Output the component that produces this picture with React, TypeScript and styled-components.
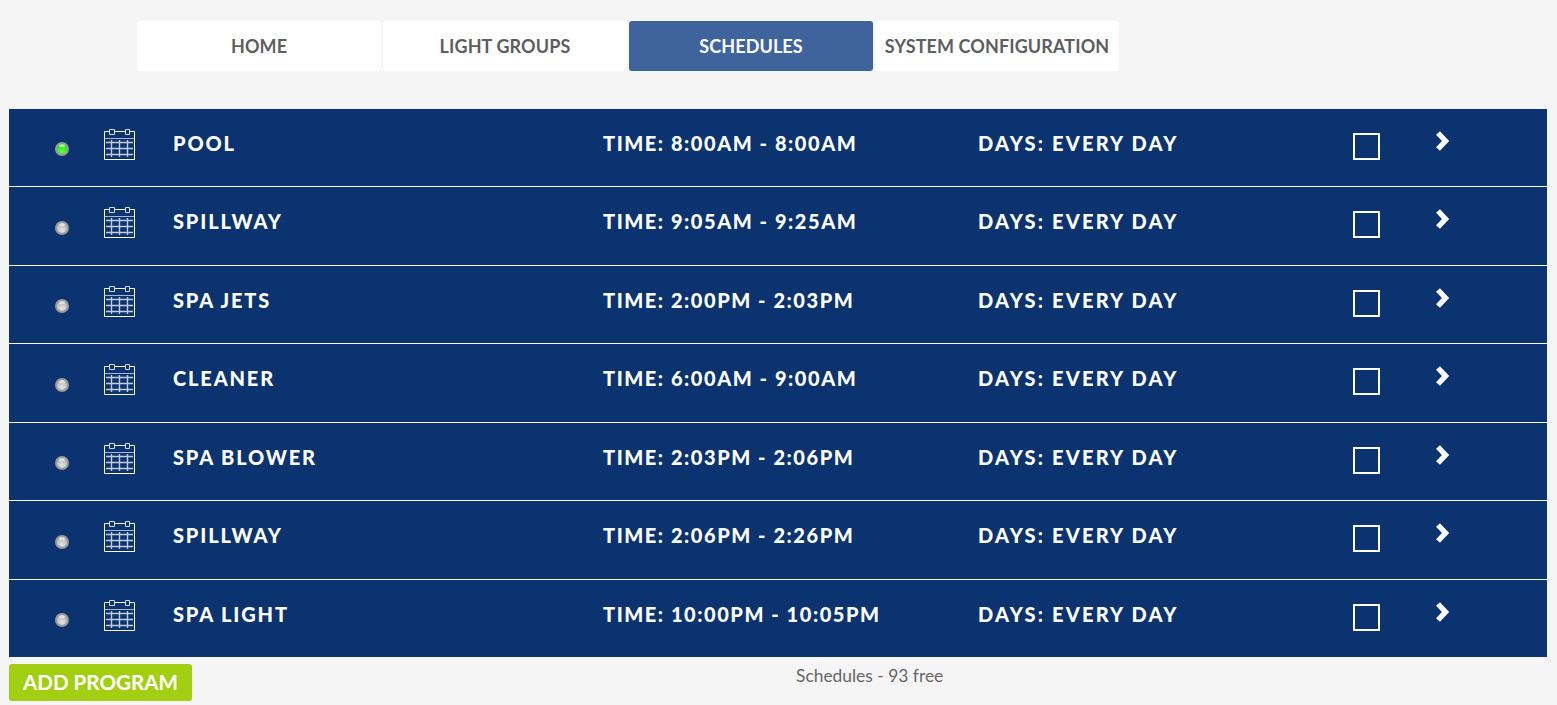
import * as React from "react";
import styled, { createGlobalStyle } from "styled-components";

const FONT = `Lato, "Open Sans", "Liberation Sans", sans-serif`;

const schedules = [
  { name: "POOL", time: "8:00AM - 8:00AM", on: true },
  { name: "SPILLWAY", time: "9:05AM - 9:25AM" },
  { name: "SPA JETS", time: "2:00PM - 2:03PM" },
  { name: "CLEANER", time: "6:00AM - 9:00AM" },
  { name: "SPA BLOWER", time: "2:03PM - 2:06PM" },
  { name: "SPILLWAY", time: "2:06PM - 2:26PM" },
  { name: "SPA LIGHT", time: "10:00PM - 10:05PM" },
];

const tabs = ["HOME", "LIGHT GROUPS", "SCHEDULES", "SYSTEM CONFIGURATION"];

function CalendarIcon() {
  return (
    <CalendarSvg viewBox="0 0 31 31" fill="none">
      <path d="M.5 2.5h30v28H.5z" stroke="#fff" />
      <path d="M.5 9.5h30" stroke="#aab6cc" />
      <path d="M5.5.5h5v5h-5zM21.5.5h4v5h-4z" fill="#0b3370" stroke="#d5dbe6" />
      <path
        d="M2 13.5h27M2 19.5h27M2 25.5h27M7.5 11v17M15.5 11v17M23.5 11v17"
        stroke="#c3ccdc"
        strokeWidth="1.4"
      />
    </CalendarSvg>
  );
}

function Chevron() {
  return (
    <ChevronSvg viewBox="0 0 16 20">
      <path d="M4 2 11.5 10 4 18" fill="none" stroke="#fff" strokeWidth="5.4" />
    </ChevronSvg>
  );
}

export default function App() {
  return (
    <>
      <GlobalStyle />
      <TabBar>
        {tabs.map((t) => (
          <Tab key={t} $active={t === "SCHEDULES"}>
            {t}
          </Tab>
        ))}
      </TabBar>
      <List>
        {schedules.map((s, i) => (
          <Row key={i}>
            <Led $on={s.on} />
            <CalendarIcon />
            <RowText $spacing={1.85}>{s.name}</RowText>
            <RowText $spacing={1.55}>TIME: {s.time}</RowText>
            <RowText $spacing={2.2}>DAYS: EVERY DAY</RowText>
            <CheckBox />
            <Chevron />
          </Row>
        ))}
      </List>
      <Footer>
        <AddButton>ADD PROGRAM</AddButton>
        <FreeCount>Schedules - 93 free</FreeCount>
      </Footer>
    </>
  );
}

const GlobalStyle = createGlobalStyle`
  html, body {
    margin: 0;
    background: #f5f5f5;
    font-family: ${FONT};
  }
`;

const TabBar = styled.nav`
  display: flex;
  gap: 2px;
  padding: 21px 0 0 137px;
`;

const Tab = styled.div<{ $active?: boolean }>`
  width: 244px;
  height: 50px;
  display: flex;
  align-items: center;
  justify-content: center;
  border-radius: 3px;
  background: ${(p) => (p.$active ? "#3f639b" : "#fff")};
  color: ${(p) => (p.$active ? "#fff" : "#5e5e5e")};
  font-size: 18px;
  font-weight: 700;
  letter-spacing: 0.1px;
  white-space: nowrap;
`;

const List = styled.div`
  margin: 37.75px 10px 0 9px;
`;

const Row = styled.div`
  box-sizing: border-box;
  height: 78.5px;
  display: grid;
  grid-template-columns: 95px 69px 430px 375px 375px 81px 1fr;
  align-items: start;
  background: #0b3370;
  border-bottom: 1px solid #fff;
  &:last-child {
    height: 77.5px;
    border-bottom: 0;
  }
`;

const Led = styled.span<{ $on?: boolean }>`
  position: relative;
  box-sizing: border-box;
  width: 14px;
  height: 14px;
  margin: 33.5px 0 0 46px;
  border-radius: 50%;
  border: 2px solid #9a9a9a;
  background: ${(p) =>
    p.$on
      ? "radial-gradient(circle at 50% 75%, #5cff3e 0, #2fe81f 65%, #1fb518 100%)"
      : "radial-gradient(circle at 50% 75%, #e4e4e4 0, #bdbdbd 65%, #8e8e8e 100%)"};
  &::after {
    content: "";
    position: absolute;
    top: 0;
    left: 2px;
    width: 6px;
    height: 3px;
    border-radius: 50%;
    background: rgba(255, 255, 255, 0.55);
  }
`;

const CalendarSvg = styled.svg`
  width: 31px;
  height: 31px;
  margin-top: 20px;
`;

const RowText = styled.div<{ $spacing: number }>`
  margin-top: 23px;
  color: #fff;
  font-size: 20px;
  line-height: 22px;
  font-weight: 900;
  letter-spacing: ${(p) => p.$spacing}px;
  white-space: nowrap;
`;

const CheckBox = styled.span`
  box-sizing: border-box;
  width: 27px;
  height: 27px;
  margin-top: 24px;
  border: 2px solid #fff;
`;

const ChevronSvg = styled.svg`
  width: 16px;
  height: 20px;
  margin-top: 22px;
`;

const Footer = styled.footer`
  display: flex;
  align-items: flex-start;
  padding: 6.75px 0 0 9px;
`;

const AddButton = styled.button`
  width: 183px;
  height: 37px;
  padding: 0 0 2px;
  border: 0;
  border-radius: 3px;
  background: #a2cf12;
  color: #fff;
  font-family: ${FONT};
  font-size: 20.6px;
  font-weight: 700;
`;

const FreeCount = styled.div`
  margin: 1px 0 0 604px;
  color: #666;
  font-size: 17.4px;
  line-height: 22px;
`;
